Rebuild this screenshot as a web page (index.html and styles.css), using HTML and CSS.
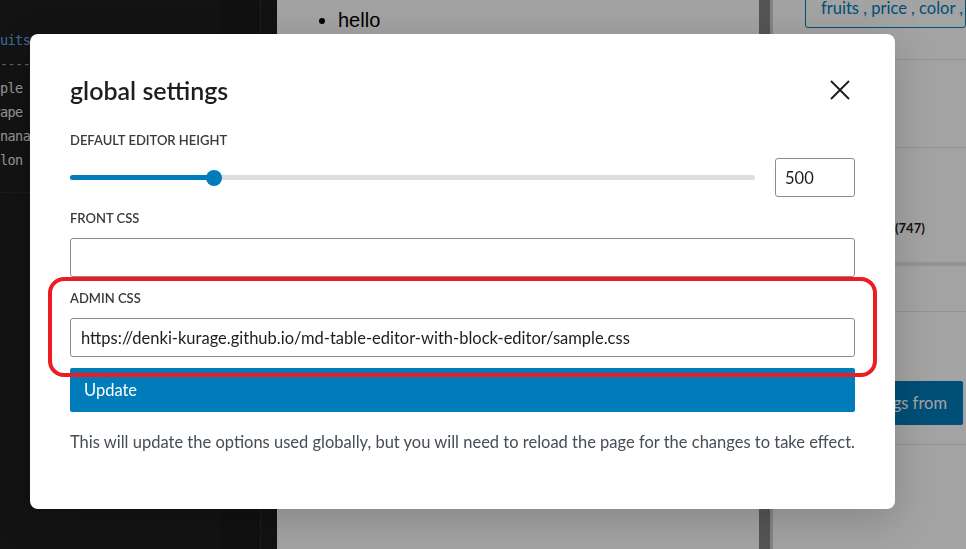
FILE: index.html
```html
<!DOCTYPE html>
<html lang="en">
<head>
<meta charset="utf-8">
<title>global settings</title>
<link rel="stylesheet" href="styles.css">
</head>
<body>
<div class="page">
  <div class="editor">
    <div class="code">
      <div class="ln"><span class="kw">fruits</span><span class="muted"> | price | color |</span></div>
      <div class="ln muted">------|-------|-------|</div>
      <div class="ln">apple</div>
      <div class="ln">grape</div>
      <div class="ln">banana</div>
      <div class="ln">melon</div>
    </div>
  </div>
  <div class="minimap"></div>
  <div class="gutter"></div>
  <div class="content">
    <ul class="list"><li>hello</li></ul>
  </div>
  <div class="scroll"></div>
  <div class="sidebar">
    <div class="sec sec1"><div class="tags">fruits , price , color , size</div></div>
    <div class="sec sec2"></div>
    <div class="sec sec3"><span class="count">(747)</span></div>
    <div class="sec sec4"></div>
    <div class="sec sec5"><div class="import">Import settings from</div></div>
  </div>
</div>
<div class="overlay"></div>
<div class="modal">
  <div class="header">
    <h1 class="title">global settings</h1>
    <svg class="close" viewBox="0 0 20 20" width="20" height="20" aria-label="Close">
      <path d="M1 1 L19 19 M19 1 L1 19" stroke="#1e1e1e" stroke-width="1.9" fill="none"/>
    </svg>
  </div>
  <div class="label first">Default editor height</div>
  <div class="range-row">
    <div class="track"><div class="fill"></div><div class="thumb"></div></div>
    <input class="field num" type="text" value="500" readonly>
  </div>
  <div class="label">Front CSS</div>
  <input class="field text" type="text" value="" readonly>
  <div class="label">Admin CSS</div>
  <input class="field text" type="text" value="https://denki-kurage.github.io/md-table-editor-with-block-editor/sample.css" readonly>
  <button class="update" type="button">Update</button>
  <p class="help">This will update the options used globally, but you will need to reload the page for the changes to take effect.</p>
  <div class="mark"></div>
</div>
</body>
</html>
```
FILE: styles.css
```css
html, body {
  margin: 0;
  padding: 0;
}
body {
  width: 966px;
  height: 549px;
  overflow: hidden;
  position: relative;
  background: #1e1e1e;
}
.page {
  display: flex;
  height: 549px;
}
.editor {
  width: 220px;
  flex-shrink: 0;
  background: #1f1f1f;
  overflow: hidden;
}
.code {
  margin-top: 28px;
  margin-left: -15px;
  font-family: "DejaVu Sans Mono", "Liberation Mono", monospace;
  font-size: 13.5px;
  letter-spacing: -0.6px;
  line-height: 24px;
  color: #e6e6e6;
  padding-bottom: 20px;
  border-bottom: 1px solid #2a2a2a;
}
.ln { white-space: pre; }
.kw { color: #64a8ea; }
.muted { color: #9a9a9a; }
.minimap {
  width: 40px;
  flex-shrink: 0;
  background: #1b1b1b;
  border-right: 1px solid #2c2c2c;
}
.gutter {
  width: 16px;
  flex-shrink: 0;
  background: #1d1d1d;
}
.content {
  width: 482px;
  flex-shrink: 0;
  background: #ffffff;
}
.list {
  margin: 8px 0 0;
  padding-left: 61px;
  font-family: "Liberation Sans", Arial, sans-serif;
  font-size: 20px;
  line-height: 24px;
  color: #000;
}
.scroll {
  width: 11px;
  flex-shrink: 0;
  background: #858585;
  border-right: 3px solid #d0d0d0;
}
.sidebar {
  flex: 1;
  min-width: 0;
  overflow: hidden;
  background: #ffffff;
  font-family: Lato, "Noto Sans", sans-serif;
}
.sec {
  border-bottom: 1px solid #e4e4e4;
  box-sizing: border-box;
}
.sec1 {
  height: 60px;
  padding-left: 32px;
  display: flow-root;
}
.sec2 { height: 88px; }
.sec3 {
  height: 118px;
  border-bottom: 4px solid #e8e8e8;
  padding: 69px 0 0 122px;
}
.sec4 { height: 46px; }
.sec5 {
  height: 133px;
  display: flex;
  justify-content: flex-end;
  padding: 69px 3px 0 0;
}
.tags {
  margin-top: -12px;
  height: 40px;
  box-sizing: border-box;
  border: 1px solid #007cba;
  border-radius: 3px;
  padding: 9px 0 0 15px;
  color: #007cba;
  font-size: 16.5px;
  line-height: 20px;
  white-space: nowrap;
}
.count {
  font-size: 13px;
  font-weight: 700;
  color: #1e1e1e;
}
.import {
  height: 44px;
  box-sizing: border-box;
  background: #007cba;
  color: #ffffff;
  border-radius: 2px;
  padding: 0 16px;
  font-size: 16.5px;
  line-height: 44px;
  white-space: nowrap;
}
.overlay {
  position: fixed;
  inset: 0;
  background: rgba(0, 0, 0, 0.36);
  z-index: 1;
}
.modal {
  position: absolute;
  left: 30px;
  top: 34px;
  width: 865px;
  box-sizing: border-box;
  padding: 40px 40px 57px;
  background: #ffffff;
  border-radius: 8px;
  box-shadow: 0 10px 40px rgba(0, 0, 0, 0.18);
  z-index: 2;
  font-family: Lato, "Noto Sans", sans-serif;
  color: #1e1e1e;
}
.header {
  display: flex;
  align-items: center;
  justify-content: space-between;
  height: 32px;
}
.title {
  margin: 0;
  font-size: 25px;
  line-height: 32px;
  font-weight: 600;
  color: #1e1e1e;
}
.close {
  display: block;
  margin-right: 5px;
}
.label {
  margin-top: 13px;
  font-size: 13px;
  line-height: 16px;
  font-weight: 600;
  text-transform: uppercase;
  color: #3a3a3a;
}
.label.first {
  margin-top: 26px;
}
.range-row {
  margin-top: 10px;
  display: flex;
  align-items: center;
  gap: 20px;
  height: 39px;
}
.track {
  flex: 1;
  height: 5px;
  background: #dddddd;
  border-radius: 3px;
  position: relative;
}
.fill {
  width: 144px;
  height: 100%;
  background: #007cba;
  border-radius: 3px;
}
.thumb {
  position: absolute;
  left: 144px;
  top: 50%;
  width: 16px;
  height: 16px;
  border-radius: 50%;
  background: #007cba;
  transform: translate(-50%, -50%);
}
.field {
  display: block;
  height: 39px;
  box-sizing: border-box;
  border: 1px solid #8c8c8c;
  border-radius: 3px;
  padding: 0 10px;
  margin: 0;
  font-family: Lato, "Noto Sans", sans-serif;
  font-size: 16.5px;
  color: #1e1e1e;
  background: #ffffff;
  outline: none;
}
.num {
  width: 80px;
  padding-left: 9px;
}
.text {
  width: 100%;
  margin-top: 12px;
}
.label + .text { margin-top: 12px; }
.update {
  display: block;
  width: 100%;
  height: 44px;
  margin-top: 11px;
  border: 0;
  border-radius: 2px;
  background: #007cba;
  color: #ffffff;
  text-align: left;
  padding: 0 14px;
  font-family: Lato, "Noto Sans", sans-serif;
  font-size: 16.5px;
}
.help {
  margin: 20px 0 0;
  font-size: 16.5px;
  line-height: 20px;
  color: #454d55;
}
.mark {
  position: absolute;
  left: 18px;
  top: 243px;
  width: 829px;
  height: 100px;
  box-sizing: border-box;
  border: 4px solid #ed1c24;
  border-radius: 16px;
  pointer-events: none;
}
```
